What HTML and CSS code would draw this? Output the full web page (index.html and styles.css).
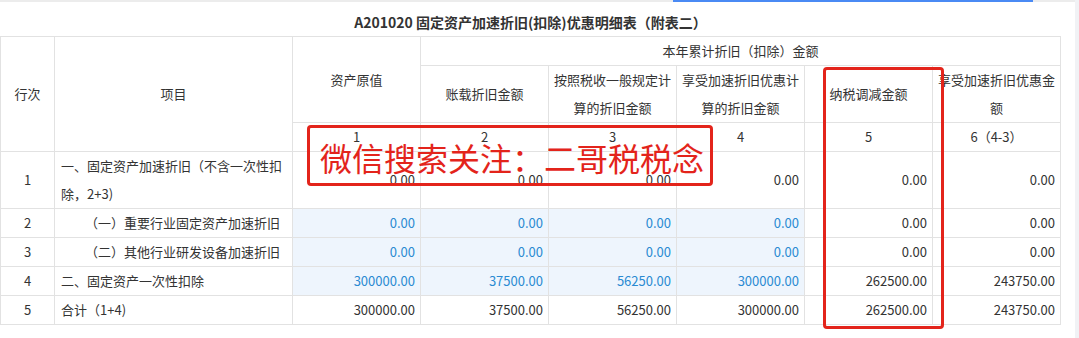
FILE: index.html
```html
<!DOCTYPE html>
<html lang="zh-CN">
<head>
<meta charset="utf-8">
<title>A201020</title>
<link rel="stylesheet" href="styles.css">
</head>
<body>
<div class="page">
  <div class="main">
    <div class="topbar"><div class="topbar-spacer"></div><div class="progress"></div></div>
    <div class="title">A201020 固定资产加速折旧(扣除)优惠明细表（附表二）</div>
    <table class="sheet">
      <colgroup>
        <col class="c-no"><col class="c-item"><col class="c-num"><col class="c-num"><col class="c-num"><col class="c-num"><col class="c-num"><col class="c-num">
      </colgroup>
      <tr class="r29">
        <th rowspan="3">行次</th>
        <th rowspan="3">项目</th>
        <th rowspan="2">资产原值</th>
        <th colspan="5">本年累计折旧（扣除）金额</th>
      </tr>
      <tr class="r57">
        <th>账载折旧金额</th>
        <th>按照税收一般规定计算的折旧金额</th>
        <th>享受加速折旧优惠计算的折旧金额</th>
        <th>纳税调减金额</th>
        <th>享受加速折旧优惠金额</th>
      </tr>
      <tr class="r29">
        <th>1</th><th>2</th><th>3</th><th>4</th><th>5</th><th>6（4-3）</th>
      </tr>
      <tr class="r57">
        <td class="no">1</td>
        <td class="item">一、固定资产加速折旧（不含一次性扣<br>除，2+3)</td>
        <td class="n">0.00</td><td class="n">0.00</td><td class="n">0.00</td><td class="n">0.00</td><td class="n">0.00</td><td class="n">0.00</td>
      </tr>
      <tr class="r29">
        <td class="no">2</td>
        <td class="item sub">（一）重要行业固定资产加速折旧</td>
        <td class="n edit">0.00</td><td class="n edit">0.00</td><td class="n edit">0.00</td><td class="n edit">0.00</td><td class="n">0.00</td><td class="n">0.00</td>
      </tr>
      <tr class="r29">
        <td class="no">3</td>
        <td class="item sub">（二）其他行业研发设备加速折旧</td>
        <td class="n edit">0.00</td><td class="n edit">0.00</td><td class="n edit">0.00</td><td class="n edit">0.00</td><td class="n">0.00</td><td class="n">0.00</td>
      </tr>
      <tr class="r29">
        <td class="no">4</td>
        <td class="item">二、固定资产一次性扣除</td>
        <td class="n edit">300000.00</td><td class="n edit">37500.00</td><td class="n edit">56250.00</td><td class="n edit">300000.00</td><td class="n">262500.00</td><td class="n">243750.00</td>
      </tr>
      <tr class="r28">
        <td class="no">5</td>
        <td class="item">合计（1+4)</td>
        <td class="n">300000.00</td><td class="n">37500.00</td><td class="n">56250.00</td><td class="n">300000.00</td><td class="n">262500.00</td><td class="n">243750.00</td>
      </tr>
    </table>
    <div class="mark mark-text">微信搜索关注：二哥税税念</div>
    <div class="mark mark-col"></div>
  </div>
  <div class="side"></div>
</div>
</body>
</html>
```

FILE: styles.css
```css
html, body {
  margin: 0;
  padding: 0;
  background: #ffffff;
}

body {
  font-family: "Noto Sans CJK SC", "Noto Sans", sans-serif;
  color: #333333;
}

.page {
  display: flex;
  width: 1079px;
  height: 338px;
  overflow: hidden;
}

.main {
  position: relative;
  width: 1075px;
  flex: none;
}

.side {
  width: 4px;
  flex: none;
  background: #f1f2f5;
}

.topbar {
  display: flex;
  height: 2px;
  background: #ececec;
}

.topbar-spacer {
  width: 673px;
}

.progress {
  width: 360px;
  background: #4a8af4;
}

.title {
  width: 1061px;
  height: 34px;
  box-sizing: border-box;
  padding-top: 6px;
  line-height: 28px;
  text-align: center;
  font-size: 14px;
  font-weight: bold;
  color: #333333;
}

.sheet {
  border-collapse: collapse;
  table-layout: fixed;
  width: 1061px;
}

.c-no { width: 54px; }
.c-item { width: 238px; }
.c-num { width: 128px; }

.sheet th,
.sheet td {
  border: 1px solid #e2e2e2;
  padding: 0 4px;
  font-size: 13px;
  line-height: 28px;
  font-weight: normal;
  color: #333333;
  vertical-align: middle;
}

.sheet th {
  text-align: center;
}

.r29 { height: 29px; }
.r28 { height: 28px; }
.r57 { height: 57px; }

.sheet td.no {
  text-align: center;
}

.sheet td.item {
  text-align: left;
  padding-left: 6px;
}

.sheet td.item.sub {
  padding-left: 30px;
}

.sheet td.n {
  text-align: right;
  padding-right: 5px;
}

.sheet td.edit {
  background: #eef5fd;
  color: #2a8ad2;
}

.mark {
  position: absolute;
  box-sizing: border-box;
  border: 3px solid #e3241b;
  border-radius: 4px;
}

.mark-text {
  left: 307px;
  top: 125px;
  width: 406px;
  height: 61px;
  padding: 2px 0 0 10px;
  display: flex;
  align-items: center;
  font-size: 32px;
  line-height: 40px;
  color: #e3241b;
  white-space: nowrap;
}

.mark-col {
  left: 823px;
  top: 67px;
  width: 121px;
  height: 262px;
}
```
